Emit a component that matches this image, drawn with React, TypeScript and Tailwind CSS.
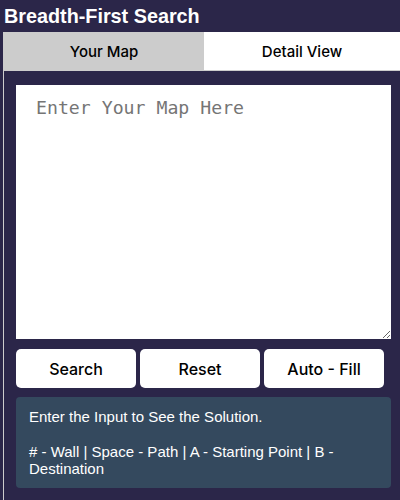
import React from "react";

export default function App() {
  return (
    <div className="w-[400px] h-[500px] bg-[#2b2649] overflow-hidden font-['Liberation_Sans',Arial,sans-serif]">
      <h1 className="h-8 pl-[4px] text-[19.8px] leading-8 font-bold text-white">Breadth-First Search</h1>
      <div className="ml-[3px] w-[397px] h-[468px] border-l border-[#cccccc]">
        <div className="flex h-[38px] font-['Inter',sans-serif] text-[15px] font-medium text-black">
          <div className="w-[200px] bg-[#cccccc] flex items-center justify-center pt-[2px]">Your Map</div>
          <div className="flex-1 bg-white flex items-center justify-center pt-[2px]">Detail View</div>
        </div>
        <div className="border-t border-[#cccccc] pl-3 pt-[14px]">
          <textarea
            placeholder="Enter Your Map Here"
            className="block w-[375px] h-[254px] bg-white px-5 py-[10px] font-['DejaVu_Sans_Mono',monospace] text-[18.2px] leading-[26px] text-black placeholder:text-[#757575] outline-none"
          />
          <div className="mt-[10px] flex gap-[4px] font-['Inter',sans-serif] text-[16px] font-medium text-black">
            <button className="w-[120px] h-[39px] bg-white rounded-[5px]">Search</button>
            <button className="w-[120px] h-[39px] bg-white rounded-[5px]">Reset</button>
            <button className="w-[120px] h-[39px] bg-white rounded-[5px]">Auto - Fill</button>
          </div>
          <div className="mt-[9px] w-[375px] h-[91px] rounded-[4px] bg-[#34495e] px-[13px] pt-[11px] text-[15px] leading-[17.3px] text-white">
            <p>Enter the Input to See the Solution.</p>
            <p className="mt-[17.3px]">
              # - Wall | Space - Path | A - Starting Point | B - Destination
            </p>
          </div>
        </div>
      </div>
    </div>
  );
}
